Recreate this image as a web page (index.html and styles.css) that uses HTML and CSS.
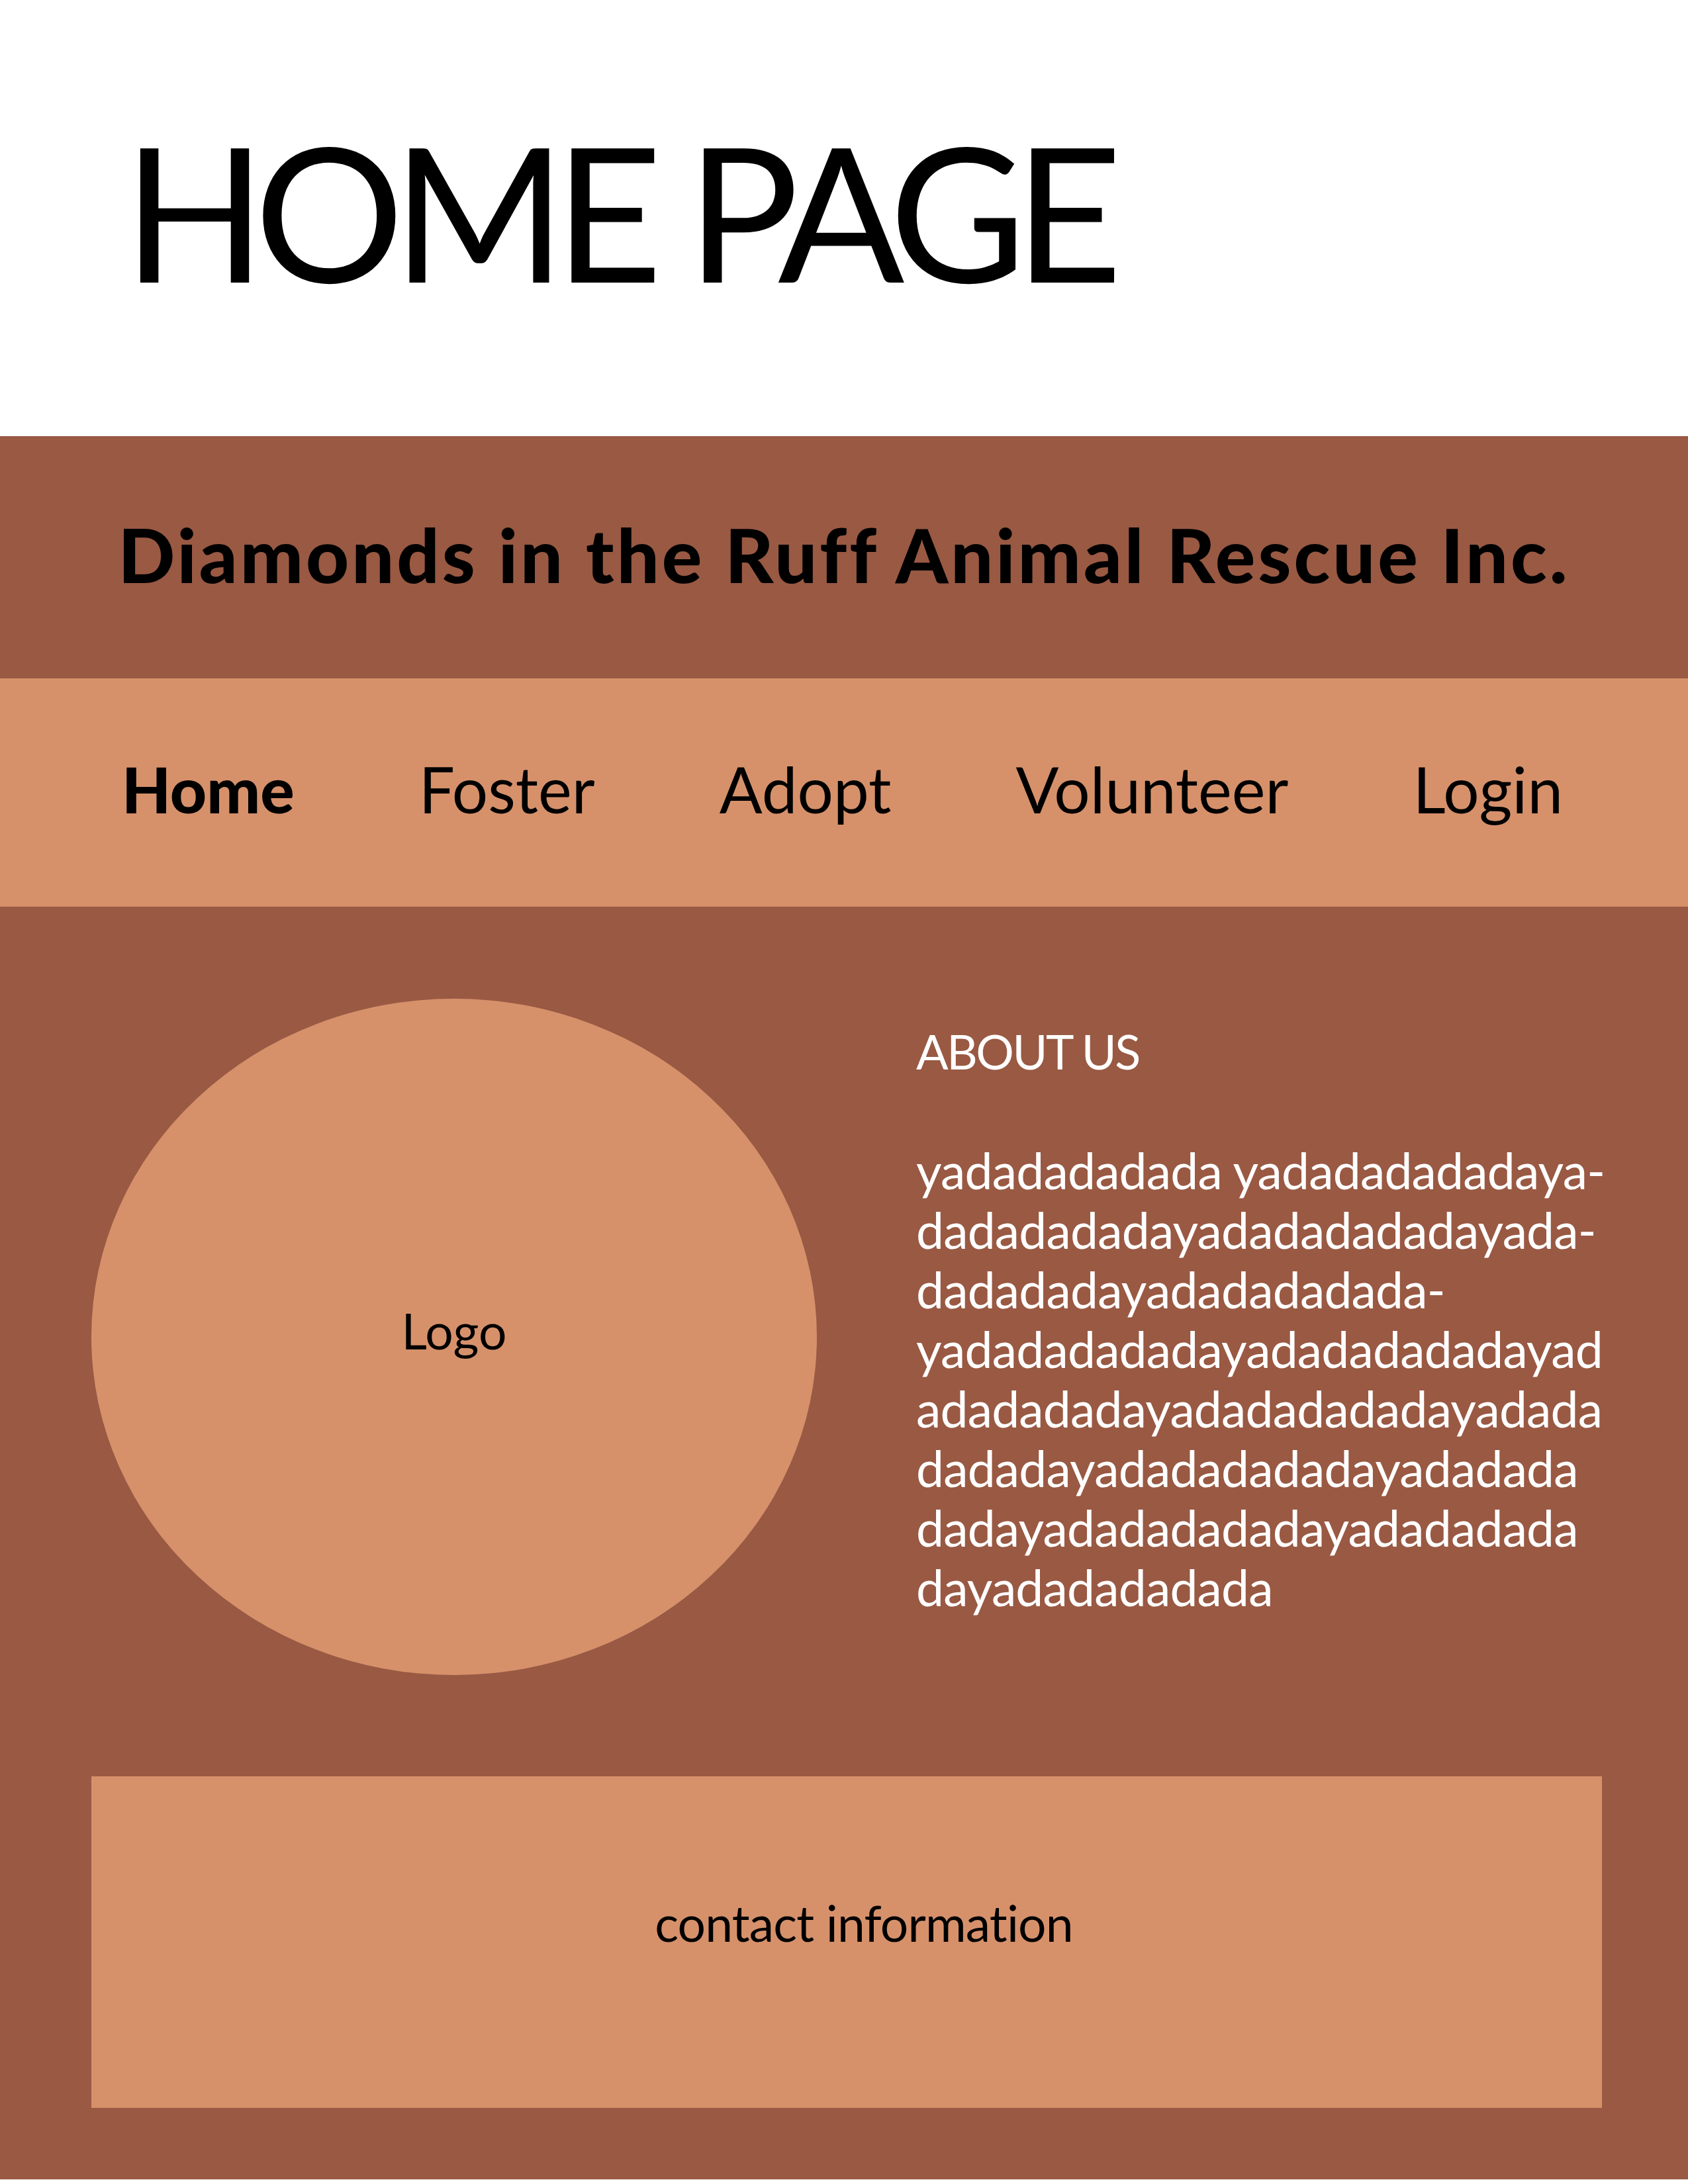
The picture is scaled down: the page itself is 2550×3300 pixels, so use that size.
FILE: index.html
```html
<!DOCTYPE html>
<html lang="en">
<head>
<meta charset="utf-8">
<title>Home Page</title>
<link rel="stylesheet" href="styles.css">
</head>
<body>
<header class="page-head">
  <h1 class="page-title">HOME PAGE</h1>
</header>
<section class="org-band">
  <h2 class="org-name">Diamonds in the Ruff Animal Rescue Inc.</h2>
</section>
<nav class="nav">
  <a class="nav-item nav-item-active">Home</a>
  <a class="nav-item">Foster</a>
  <a class="nav-item">Adopt</a>
  <a class="nav-item">Volunteer</a>
  <a class="nav-item">Login</a>
</nav>
<main class="main">
  <div class="top-row">
    <div class="logo"><span class="logo-text">Logo</span></div>
    <div class="about">
      <h3 class="about-title">ABOUT US</h3>
      <p class="about-text">yadadadadada yadadadadadaya-<br>dadadadadayadadadadadayada-<br>dadadadayadadadadada-<br>yadadadadadayadadadadadayad<br>adadadadayadadadadadayadada<br>dadadayadadadadadayadadada<br>dadayadadadadadayadadadada<br>dayadadadadada</p>
    </div>
  </div>
  <div class="contact">contact information</div>
</main>
</body>
</html>
```
FILE: styles.css
```css
* { box-sizing: border-box; }
html, body { margin: 0; padding: 0; background: #ffffff; }
body { width: 2550px; font-family: Lato, "Open Sans", sans-serif; color: #000; }

.page-head { height: 659px; padding: 176px 0 0 186px; }
.page-title { margin: 0; font-family: Lato, sans-serif; font-weight: 400; font-size: 283px; line-height: 283px; letter-spacing: -18px; }

.org-band { height: 366px; background: #995943; padding-top: 122px; text-align: center; }
.org-name { margin: 0; font-family: Lato, sans-serif; font-weight: 900; font-size: 113px; line-height: 113px; letter-spacing: 4px; }

.nav { height: 345px; background: #d6916b; padding: 119px 189px 0 184px; display: flex; justify-content: space-between; align-items: flex-start; }
.nav-item { font-size: 96px; line-height: 96px; font-weight: 400; color: #000; }
.nav-item-active { font-weight: 900; }

.main { background: #995943; padding: 139px 130px 108px 138px; display: flex; flex-direction: column; gap: 153px; }
.top-row { display: flex; gap: 150px; align-items: flex-start; }
.logo { width: 1096px; height: 1022px; border-radius: 50%; background: #d6916b; display: flex; align-items: center; justify-content: center; padding-bottom: 20px; flex: none; }
.logo-text { font-size: 75px; line-height: 90px; }
.about { padding-top: 34px; color: #ffffff; }
.about-title { margin: 0; font-weight: 400; font-size: 72px; line-height: 90px; letter-spacing: -2.5px; }
.about-text { margin: 90px 0 0; font-size: 75px; line-height: 90px; white-space: nowrap; letter-spacing: -0.8px; }
.contact { width: 2282px; height: 501px; background: #d6916b; padding: 176px 0 0 52px; text-align: center; font-size: 75px; line-height: 90px; letter-spacing: -0.8px; }
```
